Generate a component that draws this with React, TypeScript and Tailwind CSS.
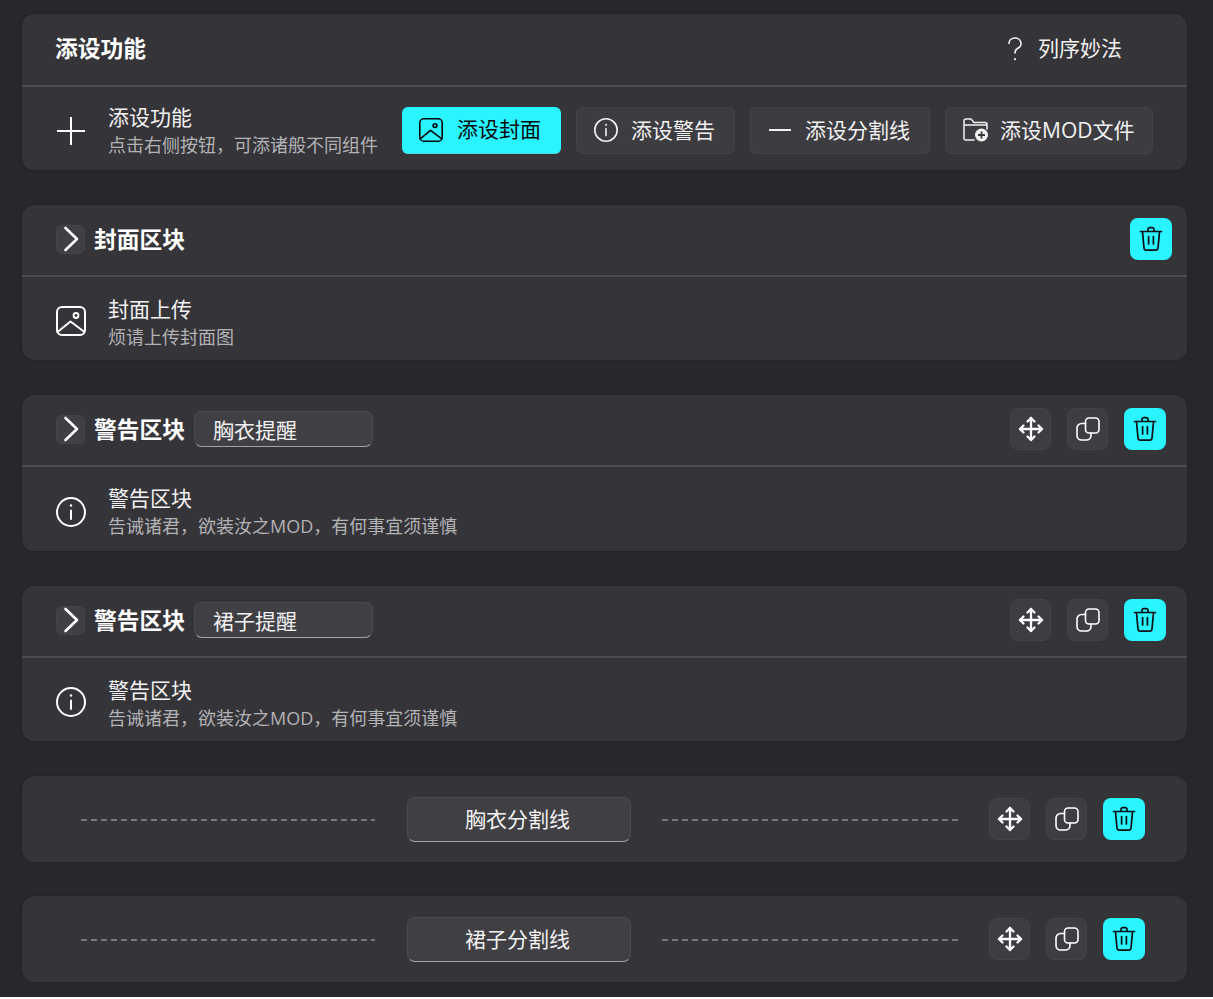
import React from "react";

const stroke = { fill: "none", stroke: "currentColor", strokeLinecap: "round", strokeLinejoin: "round" } as const;

function ImageIcon({ size = 30 }: { size?: number }) {
  return (
    <svg width={size} height={size} viewBox="0 0 30 30" {...stroke} strokeWidth={2} className="shrink-0">
      <rect x="1" y="1" width="28" height="28" rx="5" />
      <circle cx="20" cy="9.5" r="2.4" />
      <path d="M1.5 26 L14.5 15.5 L28.5 26" />
    </svg>
  );
}
function InfoIcon({ size = 30 }: { size?: number }) {
  return (
    <svg width={size} height={size} viewBox="0 0 30 30" {...stroke} strokeWidth={2} className="shrink-0">
      <circle cx="15" cy="15" r="14" />
      <path d="M15 13.5 V22" />
      <path d="M15 8.4 V8.6" strokeWidth={2.4} />
    </svg>
  );
}
function PlusIcon() {
  return (
    <svg width="30" height="30" viewBox="0 0 30 30" {...stroke} strokeWidth={2} className="shrink-0">
      <path d="M15 1 V29 M1 15 H29" strokeLinecap="butt" />
    </svg>
  );
}
function Chevron() {
  return (
    <span className="mb-[2px] flex h-[29px] w-[29px] shrink-0 items-center justify-center rounded-md border border-[#454449] bg-[#403f44]">
      <svg width="16" height="26" viewBox="0 0 16 26" {...stroke} strokeWidth={2.6} className="text-white">
        <path d="M2.5 2 L14 13 L2.5 24" />
      </svg>
    </span>
  );
}
function TrashIcon() {
  return (
    <svg width="24" height="26" viewBox="0 0 24 26" {...stroke} strokeWidth={1.7}>
      <path d="M1.5 5.5 H22.5" />
      <path d="M9 5.2 V3.4 A1.8 1.8 0 0 1 10.8 1.6 H13.2 A1.8 1.8 0 0 1 15 3.4 V5.2" />
      <path d="M3.5 5.8 L5 22 A2.4 2.4 0 0 0 7.4 24.2 H16.6 A2.4 2.4 0 0 0 19 22 L20.5 5.8" />
      <path d="M9.6 10.5 V18 M14.4 10.5 V18" />
    </svg>
  );
}
function MoveIcon() {
  return (
    <svg width="26" height="26" viewBox="0 0 26 26" {...stroke} strokeWidth={2.3}>
      <path d="M13 2 V24 M2 13 H24" />
      <path d="M9.5 5.5 L13 2 L16.5 5.5 M9.5 20.5 L13 24 L16.5 20.5 M5.5 9.5 L2 13 L5.5 16.5 M20.5 9.5 L24 13 L20.5 16.5" />
    </svg>
  );
}
function CopyIcon() {
  return (
    <svg width="24" height="24" viewBox="0 0 24 24" {...stroke} strokeWidth={1.6}>
      <rect x="9.5" y="1" width="13.5" height="15" rx="3.5" />
      <path d="M9.5 6.5 H5.5 A4.5 4.5 0 0 0 1 11 V18.5 A4.5 4.5 0 0 0 5.5 23 H10.5 A4.5 4.5 0 0 0 15 18.5 V16" />
    </svg>
  );
}
function FolderPlus() {
  return (
    <svg width="26" height="24" viewBox="0 0 26 24" className="shrink-0">
      <path
        d="M11 22 H3 A2 2 0 0 1 1 20 V3 A2 2 0 0 1 3 1 H8 L11 4.5 H22 A2 2 0 0 1 24 6.5 V11 M1 7 H24"
        fill="none"
        stroke="currentColor"
        strokeWidth="1.5"
        strokeLinecap="round"
        strokeLinejoin="round"
      />
      <circle cx="18.5" cy="17" r="6.5" fill="currentColor" />
      <path d="M18.5 13.5 V20.5 M15 17 H22" stroke="#39383d" strokeWidth="1.8" />
    </svg>
  );
}

function IconBtn({ children, hot }: { children: React.ReactNode; hot?: boolean }) {
  return (
    <button
      className={
        hot
          ? "flex h-[42px] w-[42px] items-center justify-center rounded-lg bg-[#2af4ff] text-[#0c1114]"
          : "flex h-[42px] w-[41px] items-center justify-center rounded-lg border border-[#444348] bg-[#3e3d42] text-white"
      }
    >
      {children}
    </button>
  );
}

function Actions() {
  return (
    <div className="flex items-center gap-4">
      <IconBtn>
        <MoveIcon />
      </IconBtn>
      <IconBtn>
        <CopyIcon />
      </IconBtn>
      <IconBtn hot>
        <TrashIcon />
      </IconBtn>
    </div>
  );
}

function AddBtn({ icon, label, w, hot, gap }: { icon: React.ReactNode; label: string; w: string; hot?: boolean; gap: string }) {
  return (
    <button
      className={`flex h-[47px] items-center rounded-md pl-[17px] text-[21px] leading-none ${w} ${gap} ${
        hot ? "border-b border-b-[#4fdbe3] bg-[#2af4ff] text-[#07090c]" : "border border-[#444348] bg-[#3d3c41] text-[#f2f2f2]"
      }`}
    >
      {icon}
      <span className="whitespace-nowrap">{label}</span>
    </button>
  );
}

function Row({ icon, title, sub, low }: { icon: React.ReactNode; title: string; sub: string; low?: boolean }) {
  return (
    <div className="flex items-center gap-[22px] text-white">
      {icon}
      <div className={low ? "pt-[7px]" : "pt-[3px]"}>
        <div className="text-[21px] leading-[26px] text-[#f2f2f2]">{title}</div>
        <div className="text-[18px] leading-[31px] text-[#b3b2b5]">{sub}</div>
      </div>
    </div>
  );
}

function WarningCard({ name, h, low }: { name: string; h: string; low?: boolean }) {
  return (
    <section className={`flex flex-col rounded-xl bg-[#353439] shadow-[0_0_2px_rgba(0,0,0,0.35)] ${h}`}>
      <header className="flex h-[72px] shrink-0 items-center justify-between border-b-2 border-[#4d4c51] pl-[34px] pr-[21px]">
        <div className="flex items-center">
          <Chevron />
          <h2 className="ml-[9px] text-[22.75px] font-bold text-white">警告区块</h2>
          <div className="mb-[2px] ml-[9px] flex h-[36px] w-[179px] items-center rounded-lg border border-[#4c4b50] border-b-[#a3a2a5] bg-[#403f44] pl-[18px] pt-[2px] text-[21px] leading-none text-[#f2f2f2]">
            {name}
          </div>
        </div>
        <div className="mb-[2px]">
          <Actions />
        </div>
      </header>
      <div className="flex flex-1 items-center pl-[34px] pt-[5px]">
        <Row low={low} icon={<InfoIcon />} title="警告区块" sub="告诫诸君，欲装汝之MOD，有何事宜须谨慎" />
      </div>
    </section>
  );
}

function DashLine({ w }: { w: string }) {
  return <div className={`mt-[2px] h-[2px] bg-[repeating-linear-gradient(90deg,#77767a_0_6px,transparent_6px_10px)] ${w}`} />;
}

function DividerCard({ name }: { name: string }) {
  return (
    <section className="flex h-[86px] items-center rounded-xl bg-[#353439] pl-[59px] shadow-[0_0_2px_rgba(0,0,0,0.35)]">
      <DashLine w="w-[294px]" />
      <div className="ml-[32px] flex h-[45px] w-[224px] items-center justify-center rounded-lg border border-[#4c4b50] border-b-[#a3a2a5] bg-[#403f44] pr-[3px] pt-[2px] text-[21px] text-[#f2f2f2]">
        {name}
      </div>
      <div className="ml-[31px] flex items-center gap-[31px]">
        <DashLine w="w-[296px]" />
        <Actions />
      </div>
    </section>
  );
}

export default function App() {
  return (
    <div className="h-[997px] overflow-hidden bg-[#28272c] pt-[14px] pl-[22px] pr-[26px] font-['Open_Sans','Noto_Sans_CJK_SC',sans-serif]">
      <div className="flex flex-col gap-[35px]">
        <section className="flex h-[156px] flex-col rounded-xl bg-[#353439] shadow-[0_0_2px_rgba(0,0,0,0.35)]">
          <header className="flex h-[73px] shrink-0 items-center justify-between border-b-2 border-[#4d4c51] pb-[2px] pl-[33px] pr-[65px]">
            <h1 className="mt-[2px] text-[22.75px] font-bold text-white">添设功能</h1>
            <div className="flex items-center gap-[15px] text-[21px] text-[#f2f2f2]">
              <svg width="16" height="24" viewBox="0 0 16 24" {...stroke} strokeWidth={1.6}>
                <path d="M2 6.5 A6 5.5 0 1 1 10.5 11.5 C8.8 12.5 8 13.5 8 16" />
                <path d="M8 22 V22.2" strokeWidth={2} />
              </svg>
              列序妙法
            </div>
          </header>
          <div className="flex flex-1 items-center justify-between pl-[34px] pr-[34px] pt-[5px]">
            <Row icon={<PlusIcon />} title="添设功能" sub="点击右侧按钮，可添诸般不同组件" />
            <div className="mb-[2px] flex items-center gap-[15px]">
              <AddBtn hot w="w-[159px]" gap="gap-[14px]" icon={<ImageIcon size={24} />} label="添设封面" />
              <AddBtn w="w-[159px]" gap="gap-[13px]" icon={<InfoIcon size={24} />} label="添设警告" />
              <AddBtn
                w="w-[180px]"
                gap="gap-[13px]"
                label="添设分割线"
                icon={
                  <svg width="24" height="24" viewBox="0 0 24 24" {...stroke} strokeWidth={2}>
                    <path d="M1 12 H23" strokeLinecap="butt" />
                  </svg>
                }
              />
              <AddBtn w="w-[208px]" gap="gap-[11px]" icon={<FolderPlus />} label="添设MOD文件" />
            </div>
          </div>
        </section>

        <section className="flex h-[155px] flex-col rounded-xl bg-[#353439] shadow-[0_0_2px_rgba(0,0,0,0.35)]">
          <header className="flex h-[72px] shrink-0 items-center justify-between border-b-2 border-[#4d4c51] pl-[34px] pr-[15px]">
            <div className="flex items-center">
              <Chevron />
              <h2 className="ml-[9px] text-[22.75px] font-bold text-white">封面区块</h2>
            </div>
            <div className="mb-[2px]">
              <IconBtn hot>
                <TrashIcon />
              </IconBtn>
            </div>
          </header>
          <div className="flex flex-1 items-center pl-[34px] pt-[5px]">
            <Row low icon={<ImageIcon />} title="封面上传" sub="烦请上传封面图" />
          </div>
        </section>

        <WarningCard name="胸衣提醒" h="h-[156px]" />
        <WarningCard low name="裙子提醒" h="h-[155px]" />
        <DividerCard name="胸衣分割线" />
        <div className="-mt-px">
          <DividerCard name="裙子分割线" />
        </div>
      </div>
    </div>
  );
}
